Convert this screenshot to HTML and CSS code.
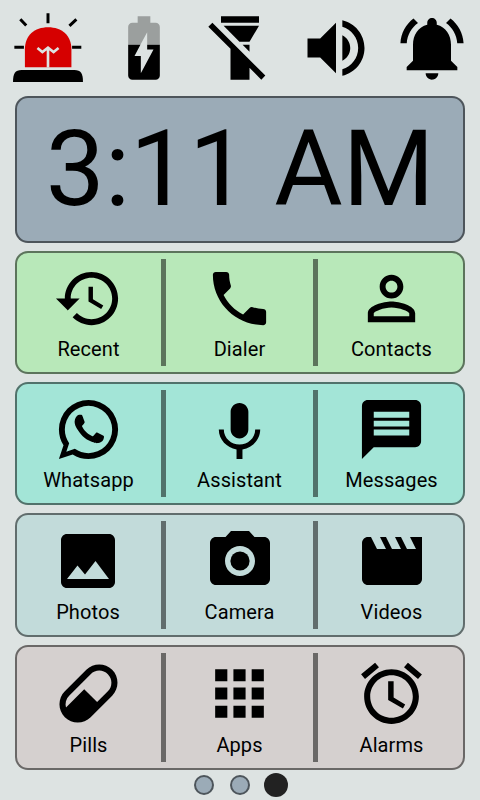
FILE: index.html
```html
<!DOCTYPE html>
<html lang="en">
<head>
<meta charset="utf-8">
<title>Launcher</title>
<link rel="stylesheet" href="styles.css">
</head>
<body>
<header class="status">
  <svg viewBox="28.8 28.8 230.4 230.4">
    <path d="M38 247C38 222 44 211 64 211H224C244 211 250 222 250 247Z"/>
    <path class="lamp" d="M74 202V148C74 106 103 81 144.500 81S215 106 215 148V202Z"/>
    <path class="filament" d="M112 144L127 156L144 143L161 156L176 144M144 143V203"/>
    <path class="rays" d="M144 39V69M60 57L78 76M230 57L209 77M42 142H71M217 142H245"/>
  </svg>
  <svg viewBox="0 0 24 24">
    <path class="drained" d="M17 5.330C17 4.600 16.400 4 15.670 4H14V2h-4v2H8.330C7.600 4 7 4.600 7 5.330V11h3.870L13 7v4h4V5.330z"/>
    <path d="M13 12.500h2L11 20v-5.500H9l1.870-3.500H7v9.670C7 21.400 7.600 22 8.330 22h7.330c.74 0 1.340-.6 1.340-1.330V11h-4v1.500z"/>
  </svg>
  <svg viewBox="0 0 24 24"><path d="M2 5.270L3.280 4L20 20.720L18.730 22L15 18.270V22H9V12.270L2 5.270M18 5L15 10H11.820L6.820 5H18M18 4H6V2H18V4M15 11V13.180L12.820 11H15Z"/></svg>
  <svg viewBox="0 0 24 24"><path d="M3 9v6h4l5 5V4L7 9H3zm13.500 3c0-1.770-1.020-3.290-2.500-4.030v8.050c1.480-.73 2.500-2.250 2.500-4.020zM14 3.230v2.060c2.890.86 5 3.540 5 6.710s-2.110 5.850-5 6.710v2.060c4.010-.91 7-4.490 7-8.770s-2.990-7.860-7-8.770z"/></svg>
  <svg viewBox="0 0 24 24"><path d="M7.580 4.080L6.150 2.650C3.750 4.480 2.170 7.300 2.030 10.500h2c.15-2.650 1.510-4.970 3.550-6.420zm12.390 6.420h2c-.15-3.200-1.730-6.020-4.120-7.850l-1.420 1.430c2.020 1.450 3.390 3.770 3.540 6.420zM18 11c0-3.070-1.640-5.640-4.500-6.320V4c0-.83-.67-1.500-1.500-1.500s-1.500.67-1.500 1.500v.68C7.630 5.360 6 7.920 6 11v5l-2 2v1h16v-1l-2-2v-5zm-6 11c.14 0 .27-.01.4-.04.65-.14 1.180-.58 1.440-1.180.1-.24.15-.5.15-.78h-4c.01 1.100.9 2 2.010 2z"/></svg>
</header>
<main class="home">
  <section class="panel clock">3:11 AM</section>

  <section class="panel row green">
    <div class="app">
      <svg viewBox="0 0 24 24"><path d="M13 3c-4.970 0-9 4.030-9 9H1l3.890 3.890.07.14L9 12H6c0-3.870 3.130-7 7-7s7 3.130 7 7-3.130 7-7 7c-1.930 0-3.680-.79-4.940-2.060l-1.420 1.420C8.270 19.990 10.510 21 13 21c4.970 0 9-4.030 9-9s-4.030-9-9-9zm-1 5v5l4.280 2.540.72-1.210-3.500-2.080V8H12z"/></svg>
      <span>Recent</span>
    </div>
    <i class="divider"></i>
    <div class="app">
      <svg viewBox="0 0 24 24"><path d="M6.620 10.790c1.440 2.830 3.760 5.140 6.590 6.590l2.200-2.200c.27-.27.67-.36 1.020-.24 1.120.37 2.330.57 3.570.57.55 0 1 .45 1 1V20c0 .55-.45 1-1 1-9.390 0-17-7.610-17-17 0-.55.45-1 1-1h3.500c.55 0 1 .45 1 1 0 1.250.2 2.450.57 3.570.11.35.03.74-.25 1.020l-2.200 2.200z"/></svg>
      <span>Dialer</span>
    </div>
    <i class="divider"></i>
    <div class="app">
      <svg viewBox="0 0 24 24"><path d="M12 6c1.100 0 2 .9 2 2s-.9 2-2 2-2-.9-2-2 .9-2 2-2m0 9c2.700 0 5.800 1.290 6 2v1H6v-.99c.2-.72 3.300-2.010 6-2.010m0-11C9.790 4 8 5.790 8 8s1.790 4 4 4 4-1.790 4-4-1.790-4-4-4zm0 9c-2.670 0-8 1.340-8 4v3h16v-3c0-2.660-5.330-4-8-4z"/></svg>
      <span>Contacts</span>
    </div>
  </section>

  <section class="panel row teal">
    <div class="app">
      <svg viewBox="0 0 24 24"><path d="M16.750 13.960C17 14.090 17.160 14.160 17.210 14.260C17.270 14.370 17.250 14.870 17 15.440C16.800 16 15.760 16.540 15.300 16.560C14.840 16.580 14.830 16.920 12.340 15.830C9.850 14.740 8.350 12.080 8.230 11.910C8.110 11.740 7.270 10.530 7.310 9.300C7.360 8.080 8 7.500 8.260 7.260C8.500 7 8.770 6.970 8.940 7H9.410C9.560 7 9.770 6.940 9.960 7.450L10.650 9.320C10.710 9.450 10.750 9.600 10.660 9.760L10.390 10.170L10 10.590C9.880 10.710 9.740 10.840 9.880 11.090C10 11.350 10.500 12.180 11.200 12.870C12.110 13.750 12.910 14.040 13.150 14.170C13.390 14.310 13.540 14.290 13.690 14.130L14.500 13.190C14.690 12.940 14.850 13 15.080 13.080L16.750 13.960M12 2A10 10 0 0 1 22 12A10 10 0 0 1 12 22C10.030 22 8.200 21.430 6.650 20.450L2 22L3.550 17.350C2.570 15.800 2 13.970 2 12A10 10 0 0 1 12 2M12 4A8 8 0 0 0 4 12C4 13.720 4.540 15.310 5.460 16.610L4.500 19.500L7.390 18.540C8.690 19.460 10.280 20 12 20A8 8 0 0 0 20 12A8 8 0 0 0 12 4Z"/></svg>
      <span>Whatsapp</span>
    </div>
    <i class="divider"></i>
    <div class="app">
      <svg viewBox="0 0 24 24"><path d="M12 15c1.660 0 2.990-1.340 2.990-3L15 6c0-1.660-1.340-3-3-3S9 4.340 9 6v6c0 1.660 1.340 3 3 3zm5.300-3c0 3-2.540 5.100-5.300 5.100S6.700 15 6.700 12H5c0 3.420 2.720 6.230 6 6.720V22h2v-3.280c3.280-.48 6-3.300 6-6.720h-1.700z"/></svg>
      <span>Assistant</span>
    </div>
    <i class="divider"></i>
    <div class="app">
      <svg viewBox="0 0 24 24"><path d="M20 2H4c-1.100 0-1.990.9-1.990 2L2 22l4-4h14c1.100 0 2-.9 2-2V4c0-1.100-.9-2-2-2zm-2 12H6v-2h12v2zm0-3H6V9h12v2zm0-3H6V6h12v2z"/></svg>
      <span>Messages</span>
    </div>
  </section>

  <section class="panel row mist">
    <div class="app">
      <svg viewBox="0 0 24 24"><path d="M21 19V5c0-1.100-.9-2-2-2H5c-1.100 0-2 .9-2 2v14c0 1.100.9 2 2 2h14c1.100 0 2-.9 2-2zM8.500 13.500l2.500 3.010L14.500 12l4.500 6H5l3.500-4.500z"/></svg>
      <span>Photos</span>
    </div>
    <i class="divider"></i>
    <div class="app">
      <svg viewBox="0 0 24 24"><circle cx="12" cy="12" r="3.200"/><path d="M9 2L7.170 4H4c-1.100 0-2 .9-2 2v12c0 1.100.9 2 2 2h16c1.100 0 2-.9 2-2V6c0-1.100-.9-2-2-2h-3.170L15 2H9zm3 15c-2.760 0-5-2.240-5-5s2.240-5 5-5 5 2.240 5 5-2.240 5-5 5z"/></svg>
      <span>Camera</span>
    </div>
    <i class="divider"></i>
    <div class="app">
      <svg viewBox="0 0 24 24"><path d="M18 4l2 4h-3l-2-4h-2l2 4h-3l-2-4H8l2 4H7L5 4H4c-1.100 0-1.990.9-1.990 2L2 18c0 1.100.9 2 2 2h16c1.100 0 2-.9 2-2V4h-4z"/></svg>
      <span>Videos</span>
    </div>
  </section>

  <section class="panel row stone">
    <div class="app">
      <svg viewBox="0 0 24 24"><path d="M4.220 11.290L11.290 4.220C13.640 1.880 17.430 1.880 19.780 4.220C22.120 6.560 22.120 10.360 19.780 12.710L12.710 19.780C10.360 22.120 6.560 22.120 4.220 19.780C1.880 17.430 1.880 13.640 4.220 11.290M5.640 12.710C4.590 13.750 4.240 15.240 4.600 16.570L10.590 10.590L14.830 14.830L18.360 11.290C19.930 9.730 19.930 7.200 18.360 5.640C16.800 4.070 14.270 4.070 12.710 5.640L5.640 12.710Z"/></svg>
      <span>Pills</span>
    </div>
    <i class="divider"></i>
    <div class="app">
      <svg viewBox="0 0 24 24"><path d="M4 8h4V4H4v4zm6 12h4v-4h-4v4zm-6 0h4v-4H4v4zm0-6h4v-4H4v4zm6 0h4v-4h-4v4zm6-10v4h4V4h-4zm-6 4h4V4h-4v4zm6 6h4v-4h-4v4zm0 6h4v-4h-4v4z"/></svg>
      <span>Apps</span>
    </div>
    <i class="divider"></i>
    <div class="app">
      <svg viewBox="0 0 24 24"><path d="M22 5.720l-4.600-3.860-1.290 1.530 4.600 3.860L22 5.720zM7.880 3.390L6.600 1.860 2 5.710l1.290 1.530 4.590-3.850zM12.700 8H10.900v6.100l4.850 2.850.75-1.330-3.800-2.270V8zM12 4c-4.970 0-9 4.030-9 9s4.020 9 9 9c4.970 0 9-4.030 9-9s-4.030-9-9-9zm0 16c-3.870 0-7-3.130-7-7s3.130-7 7-7 7 3.130 7 7-3.130 7-7 7z"/></svg>
      <span>Alarms</span>
    </div>
  </section>
</main>
<nav class="pager"><i class="dot"></i><i class="dot"></i><i class="dot current"></i></nav>
</body>
</html>
```
FILE: styles.css
```css
* { box-sizing: border-box; }

body {
  margin: 0;
  width: 480px;
  height: 800px;
  overflow: hidden;
  background: #dde3e2;
  color: #000;
  font-family: Roboto, "Liberation Sans", sans-serif;
}

svg { display: block; }

.status {
  display: grid;
  grid-template-columns: repeat(5, 96px);
  height: 96px;
  place-items: center;
}
.status svg { width: 76px; height: 76px; }

.lamp { fill: #d60000; }
.filament { fill: none; stroke: #dde3e2; stroke-width: 8; }
.rays { fill: none; stroke: #000; stroke-width: 9; }
.drained { fill: #9b9f9e; }

.home {
  display: flex;
  flex-direction: column;
  gap: 8px;
  padding: 0 15px;
}

.panel {
  border: 2px solid rgba(0, 0, 0, 0.5);
  border-radius: 13px;
}

.clock {
  height: 147px;
  background: #9babb7;
  font-size: 105px;
  line-height: 143px;
  text-align: center;
  white-space: nowrap;
}

.row {
  display: grid;
  grid-template-columns: 144px 5px 147px 5px 145px;
}
.green { height: 123px; background: #b8e8b9; --icon: 71px; }
.teal { height: 123px; background: #a3e5d7; --icon: 71px; }
.mist { height: 124px; background: #c2dbda; --icon: 72px; }
.stone { height: 125px; background: #d5d0cf; --icon: 73px; }

.divider {
  margin: 6px 0;
  background: rgba(0, 0, 0, 0.5);
}

.app {
  display: flex;
  flex-direction: column;
  align-items: center;
  justify-content: space-between;
  padding: 10px 0 9px;
}
.app:first-child { padding-right: 1px; }
.mist .app:first-child { padding-right: 2px; }
.app:last-child { padding-left: 2px; }
.app svg { width: var(--icon); height: var(--icon); flex: none; }
.app span {
  font-size: 20px;
  line-height: 28px;
  letter-spacing: 0.1px;
}

.pager {
  display: flex;
  justify-content: center;
  align-items: center;
  height: 30px;
}
.dot {
  width: 20px;
  height: 20px;
  margin: 0 8px;
  border: 2px solid rgba(0, 0, 0, 0.5);
  border-radius: 50%;
  background: #9babb7;
}
.current {
  width: 24px;
  height: 24px;
  margin: 0 6px;
  border: 0;
  background: #222;
}
```
